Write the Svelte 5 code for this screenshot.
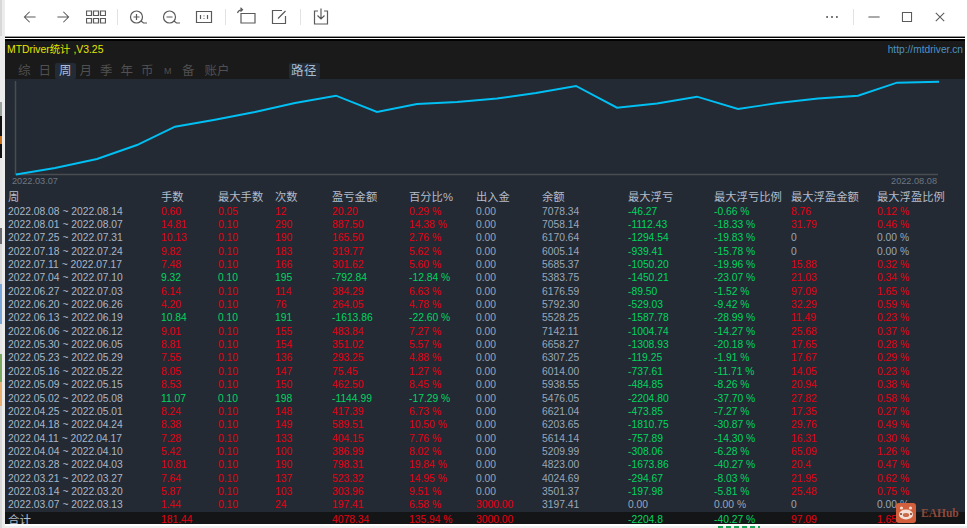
<script>
	const leftStrip = [
		['#d8d8d8', 36],
		['#ececec', 66],
		['#9aa09a', 14],
		['#101010', 20],
		['#c8701a', 8],
		['#101010', 14],
		['#e8e8e8', 70],
		['#6a6a72', 16],
		['#d8d8d8', 40],
		['#7aa6d8', 40],
		['#e4e4e4', 30],
		['#7aa860', 28],
		['#e8b070', 24],
		['#d8d8d8', 122]
	];

	const points = [
		[16, 174.5], [55, 168], [97, 159], [137, 145], [175, 126.7], [215, 119.7], [255, 112],
		[295, 103], [336, 95.7], [377, 112], [417, 104], [457, 102], [497, 98.5], [536, 93],
		[576, 86], [617, 107.7], [657, 103.5], [697, 96.7], [738, 109], [778, 103], [818, 98.5],
		[858, 95.7], [897, 82.7], [939, 81.7]
	];
	const line = points.map((p) => p.join(',')).join(' ');

	const heads = ['周', '手数', '最大手数', '次数', '盈亏金额', '百分比%', '出入金', '余额', '最大浮亏', '最大浮亏比例', '最大浮盈金额', '最大浮盈比例'];

	const rows = [
		['2022.08.08 ~ 2022.08.14', '0.60', '0.05', '12', '20.20', '0.29 %', '7078.34', '-46.27', '-0.66 %', '8.76', '0.12 %'],
		['2022.08.01 ~ 2022.08.07', '14.81', '0.10', '290', '887.50', '14.38 %', '7058.14', '-1112.43', '-18.33 %', '31.79', '0.46 %'],
		['2022.07.25 ~ 2022.07.31', '10.13', '0.10', '190', '165.50', '2.76 %', '6170.64', '-1294.54', '-19.83 %', '0', '0.00 %'],
		['2022.07.18 ~ 2022.07.24', '9.82', '0.10', '183', '319.77', '5.62 %', '6005.14', '-939.41', '-15.78 %', '0', '0.00 %'],
		['2022.07.11 ~ 2022.07.17', '7.48', '0.10', '166', '301.62', '5.60 %', '5685.37', '-1050.20', '-19.96 %', '15.88', '0.32 %'],
		['2022.07.04 ~ 2022.07.10', '9.32', '0.10', '195', '-792.84', '-12.84 %', '5383.75', '-1450.21', '-23.07 %', '21.03', '0.34 %'],
		['2022.06.27 ~ 2022.07.03', '6.14', '0.10', '114', '384.29', '6.63 %', '6176.59', '-89.50', '-1.52 %', '97.09', '1.65 %'],
		['2022.06.20 ~ 2022.06.26', '4.20', '0.10', '76', '264.05', '4.78 %', '5792.30', '-529.03', '-9.42 %', '32.29', '0.59 %'],
		['2022.06.13 ~ 2022.06.19', '10.84', '0.10', '191', '-1613.86', '-22.60 %', '5528.25', '-1587.78', '-28.99 %', '11.49', '0.23 %'],
		['2022.06.06 ~ 2022.06.12', '9.01', '0.10', '155', '483.84', '7.27 %', '7142.11', '-1004.74', '-14.27 %', '25.68', '0.37 %'],
		['2022.05.30 ~ 2022.06.05', '8.81', '0.10', '154', '351.02', '5.57 %', '6658.27', '-1308.93', '-20.18 %', '17.65', '0.28 %'],
		['2022.05.23 ~ 2022.05.29', '7.55', '0.10', '136', '293.25', '4.88 %', '6307.25', '-119.25', '-1.91 %', '17.67', '0.29 %'],
		['2022.05.16 ~ 2022.05.22', '8.05', '0.10', '147', '75.45', '1.27 %', '6014.00', '-737.61', '-11.71 %', '14.05', '0.23 %'],
		['2022.05.09 ~ 2022.05.15', '8.53', '0.10', '150', '462.50', '8.45 %', '5938.55', '-484.85', '-8.26 %', '20.94', '0.38 %'],
		['2022.05.02 ~ 2022.05.08', '11.07', '0.10', '198', '-1144.99', '-17.29 %', '5476.05', '-2204.80', '-37.70 %', '27.82', '0.58 %'],
		['2022.04.25 ~ 2022.05.01', '8.24', '0.10', '148', '417.39', '6.73 %', '6621.04', '-473.85', '-7.27 %', '17.35', '0.27 %'],
		['2022.04.18 ~ 2022.04.24', '8.38', '0.10', '149', '589.51', '10.50 %', '6203.65', '-1810.75', '-30.87 %', '29.76', '0.49 %'],
		['2022.04.11 ~ 2022.04.17', '7.28', '0.10', '133', '404.15', '7.76 %', '5614.14', '-757.89', '-14.30 %', '16.31', '0.30 %'],
		['2022.04.04 ~ 2022.04.10', '5.42', '0.10', '100', '386.99', '8.02 %', '5209.99', '-308.06', '-6.28 %', '65.09', '1.26 %'],
		['2022.03.28 ~ 2022.04.03', '10.81', '0.10', '190', '798.31', '19.84 %', '4823.00', '-1673.86', '-40.27 %', '20.4', '0.47 %'],
		['2022.03.21 ~ 2022.03.27', '7.64', '0.10', '137', '523.32', '14.95 %', '4024.69', '-294.67', '-8.03 %', '21.95', '0.62 %'],
		['2022.03.14 ~ 2022.03.20', '5.87', '0.10', '103', '303.96', '9.51 %', '3501.37', '-197.98', '-5.81 %', '25.48', '0.75 %'],
		['2022.03.07 ~ 2022.03.13', '1.44', '0.10', '24', '197.41', '6.58 %', '3197.41', '0.00', '0.00 %', '0', '0.00 %']
	];

	const tabs = ['综', '日', '周', '月', '季', '年', '币', 'M', '备', '账户'];

	// profit sign decides the first five numbers, the rest go by their own value
	function tone(value) {
		const n = parseFloat(value);
		if (n > 0) return 'red';
		if (n < 0) return 'green';
		return 'plain';
	}
</script>

<div class="page">
	<div class="strip">
		{#each leftStrip as [color, h]}
			<i style="background:{color};height:{h}px"></i>
		{/each}
	</div>

	<div class="main">
		<div class="toolbar">
			<button aria-label="back"><svg viewBox="0 0 20 20"><path d="M18 10H2M9.500 2.500L2 10l7.500 7.500" /></svg></button>
			<button aria-label="forward"><svg viewBox="0 0 20 20"><path d="M2 10h16M10.500 2.500L18 10l-7.500 7.500" /></svg></button>
			<button aria-label="thumbnails">
				<svg viewBox="0 0 20 20" class="wide">
					<path d="M.5 4h5v4.500h-5zM7.500 4h5v4.500h-5zM14.500 4h5v4.500h-5zM.5 11.500h5V16h-5zM7.500 11.500h5V16h-5zM14.500 11.500h5V16h-5z" />
				</svg>
			</button>
			<span class="sep"></span>
			<button aria-label="zoom in"><svg viewBox="0 0 20 20" class="wide"><circle cx="8.500" cy="10" r="6" /><path d="M13 14l2.500 2H19M5.500 10h6M8.500 7v6" /></svg></button>
			<button aria-label="zoom out"><svg viewBox="0 0 20 20" class="wide"><circle cx="8.500" cy="10" r="6" /><path d="M13 14l2.500 2H19M5.500 10h6" /></svg></button>
			<button aria-label="actual size"><svg viewBox="0 0 20 20" class="wide"><path d="M2.500 4.500h15v11h-15zM6.500 8v4M13.500 8v4M10 8.500v.8M10 11v.8" /></svg></button>
			<span class="sep"></span>
			<button aria-label="rotate"><svg viewBox="0 0 20 20" class="wide"><path d="M5 6.500h14V16H5zM1.500 6C2.500 3.500 4 2.700 6.500 2.700M4.500 .8l2 1.900-2 1.900" /></svg></button>
			<button aria-label="edit"><svg viewBox="0 0 20 20" class="wide"><path d="M16.500 9v7.500h-13v-13h9.500M9 11.500L16.500 4" /></svg></button>
			<span class="sep"></span>
			<button aria-label="save"><svg viewBox="0 0 20 20" class="wide"><path d="M7 4H3.500v13h13V4H13M10 1.500v10.500M6.500 8.500l3.500 3.500 3.500-3.500" /></svg></button>

			<span class="grow"></span>

			<button aria-label="more"><svg viewBox="0 0 20 20"><circle class="dot" cx="3" cy="10" r="1.500" /><circle class="dot" cx="10" cy="10" r="1.500" /><circle class="dot" cx="17" cy="10" r="1.500" /></svg></button>
			<span class="sep"></span>
			<button aria-label="minimize"><svg viewBox="0 0 20 20"><path d="M2 10h16" /></svg></button>
			<button aria-label="maximize"><svg viewBox="0 0 20 20"><path d="M3.500 3.500h13v13h-13z" /></svg></button>
			<button aria-label="close"><svg viewBox="0 0 20 20"><path d="M4 4l12 12M16 4L4 16" /></svg></button>
		</div>

		<div class="rule"></div>

		<div class="window">
			<div class="titlebar">
				<span class="title">MTDriver统计 ,V3.25</span>
				<span class="link">http://mtdriver.cn</span>
			</div>
			<div class="tabs">
				{#each tabs as tab}
					<span class="tab" class:on={tab === '周'} class:small={tab === 'M'} class:pair={tab === '账户'}>{tab}</span>
				{/each}
				<span class="tab on path">路径</span>
			</div>

			<div class="body">
				<svg class="chart" viewBox="0 0 960 97" width="960" height="97">
					<g transform="translate(-5 -79)">
						<path class="axis" d="M15.500 81v94M15 174.500h923" />
						<polyline class="curve" points={line} />
					</g>
				</svg>
				<div class="dates">
					<span>2022.03.07</span>
					<span>2022.08.08</span>
				</div>

				<div class="row head">
					{#each heads as h}
						<span>{h}</span>
					{/each}
				</div>

				{#each rows as r}
					{@const rowTone = tone(r[4])}
					<div class="row">
						<span class="date">{r[0]}</span>
						<span class={rowTone}>{r[1]}</span>
						<span class={rowTone}>{r[2]}</span>
						<span class={rowTone}>{r[3]}</span>
						<span class={rowTone}>{r[4]}</span>
						<span class={rowTone}>{r[5]}</span>
						{#if r[6] === '3197.41'}
							<span class="red">3000.00</span>
						{:else}
							<span class="plain">0.00</span>
						{/if}
						<span class="plain">{r[6]}</span>
						<span class={tone(r[7])}>{r[7]}</span>
						<span class={tone(r[8])}>{r[8]}</span>
						<span class={tone(r[9])}>{r[9]}</span>
						<span class={tone(r[10])}>{r[10]}</span>
					</div>
				{/each}

				<div class="row total">
					<span class="sum">合计</span>
					<span class="red">181.44</span>
					<span></span>
					<span></span>
					<span class="red">4078.34</span>
					<span class="red">135.94 %</span>
					<span class="red">3000.00</span>
					<span></span>
					<span class="green">-2204.8</span>
					<span class="green">-40.27 %</span>
					<span class="red">97.09</span>
					<span class="red">1.65 %</span>
				</div>

				<div class="mark">
					<svg viewBox="0 0 20 20" width="20" height="20">
						<rect width="20" height="20" rx="3" fill="#d2603c" />
						<ellipse cx="10" cy="11.500" rx="7" ry="5" fill="#f3dfd4" />
						<circle cx="5.500" cy="5" r="1.600" fill="#f3dfd4" />
						<circle cx="14.500" cy="5" r="1.600" fill="#f3dfd4" />
						<ellipse cx="10" cy="12" rx="3.200" ry="2" fill="#c8694a" />
						<circle cx="5" cy="11" r="1" fill="#7a3a2a" />
						<circle cx="15" cy="11" r="1" fill="#7a3a2a" />
					</svg>
					<span>EAHub</span>
				</div>
			</div>
		</div>

		<div class="under">
			<i></i>
		</div>
	</div>
</div>

<style>
	:global(body) {
		margin: 0;
		background: #fff;
	}

	.page {
		display: flex;
		width: 967px;
		height: 528px;
		overflow: hidden;
		font-family: 'Liberation Sans', 'Noto Sans CJK SC', sans-serif;
	}

	.strip {
		width: 5px;
		flex: none;
		border-right: 3px solid #ececec;
		box-sizing: border-box;
	}

	.strip i {
		display: block;
	}

	.main {
		width: 962px;
		display: flex;
		flex-direction: column;
	}

	.toolbar {
		display: flex;
		align-items: center;
		height: 33px;
		padding: 0 5.500px 3px 8.500px;
		margin-right: 5px;
		background: #fff;
		flex: none;
	}

	.toolbar button {
		width: 33px;
		height: 33px;
		padding: 0;
		border: 0;
		background: none;
		display: flex;
		align-items: center;
		justify-content: center;
		flex: none;
	}

	.toolbar svg {
		width: 14px;
		height: 14px;
		fill: none;
		stroke: #5a5a5a;
		stroke-width: 1.500;
	}

	.toolbar svg.wide {
		width: 20px;
		height: 20px;
		stroke-width: 1.200;
	}

	.toolbar .dot {
		fill: #5a5a5a;
		stroke: none;
	}

	.sep {
		width: 9px;
		height: 16px;
		flex: none;
		background: linear-gradient(#e2e2e2, #e2e2e2) center / 1px 100% no-repeat;
	}

	.grow {
		flex: 1;
	}

	.rule {
		height: 5px;
		flex: none;
		width: 960px;
		background: linear-gradient(#9a9a9a 0 1px, #000 1px 2px, #fff 2px 3px, #000 3px);
	}

	.window {
		width: 960px;
		height: 483px;
		flex: none;
		background: #1a1a1a;
		overflow: hidden;
	}

	.titlebar {
		display: flex;
		justify-content: space-between;
		height: 19px;
		padding: 2px 2px 0;
		box-sizing: border-box;
		font-size: 10.400px;
		line-height: 14px;
	}

	.title {
		color: #e6e600;
	}

	.link {
		color: #4d93c4;
		font-size: 10.200px;
	}

	.tabs {
		display: flex;
		height: 16px;
		padding: 3px 0 0 9px;
		align-items: flex-start;
		font-size: 12.500px;
		line-height: 16px;
		color: #505050;
	}

	.tab {
		width: 15.500px;
		padding: 0 2.500px;
		text-align: center;
		border-radius: 2px;
		white-space: nowrap;
	}

	.tab.on {
		background: #222b36;
		color: #a9bbd0;
	}

	.tab.small {
		font-size: 9px;
	}

	.tab.pair {
		width: 28px;
		margin-left: 2px;
	}

	.tab.path {
		width: 26px;
		margin-left: 55px;
		letter-spacing: 0.500px;
	}

	.body {
		position: relative;
		height: 445px;
		background: #232a33;
	}

	.chart {
		display: block;
	}

	.axis {
		fill: none;
		stroke: #4a4c50;
		stroke-width: 1.500;
	}

	.curve {
		fill: none;
		stroke: #00bff3;
		stroke-width: 1.900;
	}

	.dates {
		display: flex;
		justify-content: space-between;
		width: 925px;
		height: 14px;
		padding-left: 7px;
		font-size: 9.200px;
		line-height: 10px;
		color: #6e7782;
	}

	.row {
		display: grid;
		grid-template-columns: 153px 57px 57px 57px 77px 67px 66px 86px 86px 77px 86px 1fr;
		height: 13.360px;
		padding-left: 3px;
		font-size: 10.300px;
		line-height: 14px;
		white-space: nowrap;
		color: #a3b0c2;
	}

	.row.head {
		height: 14.500px;
		font-size: 11.300px;
		line-height: 14px;
		color: #b2bccb;
	}

	.row.total {
		height: 13px;
		line-height: 16px;
		background: #141516;
		overflow: hidden;
	}

	.sum {
		font-size: 11.500px;
		color: #b2bccb;
	}

	.date {
		color: #a9b6c8;
	}

	.red {
		color: #e60012;
	}

	.green {
		color: #00d561;
	}

	.plain {
		color: #9aa7b9;
	}

	.mark {
		position: absolute;
		left: 891px;
		top: 424px;
		display: flex;
		align-items: center;
		gap: 5px;
		font-family: 'Liberation Serif', serif;
		font-weight: bold;
		font-size: 11.500px;
		color: #8d4a3c;
	}

	.under {
		flex: 1;
		margin-top: 2px;
		background: #efefef;
	}

	.under i {
		display: block;
		width: 42px;
		height: 2px;
		margin-left: 713px;
		background: repeating-linear-gradient(90deg, #1fa85a 0 5px, #efefef 5px 8px);
	}
</style>
